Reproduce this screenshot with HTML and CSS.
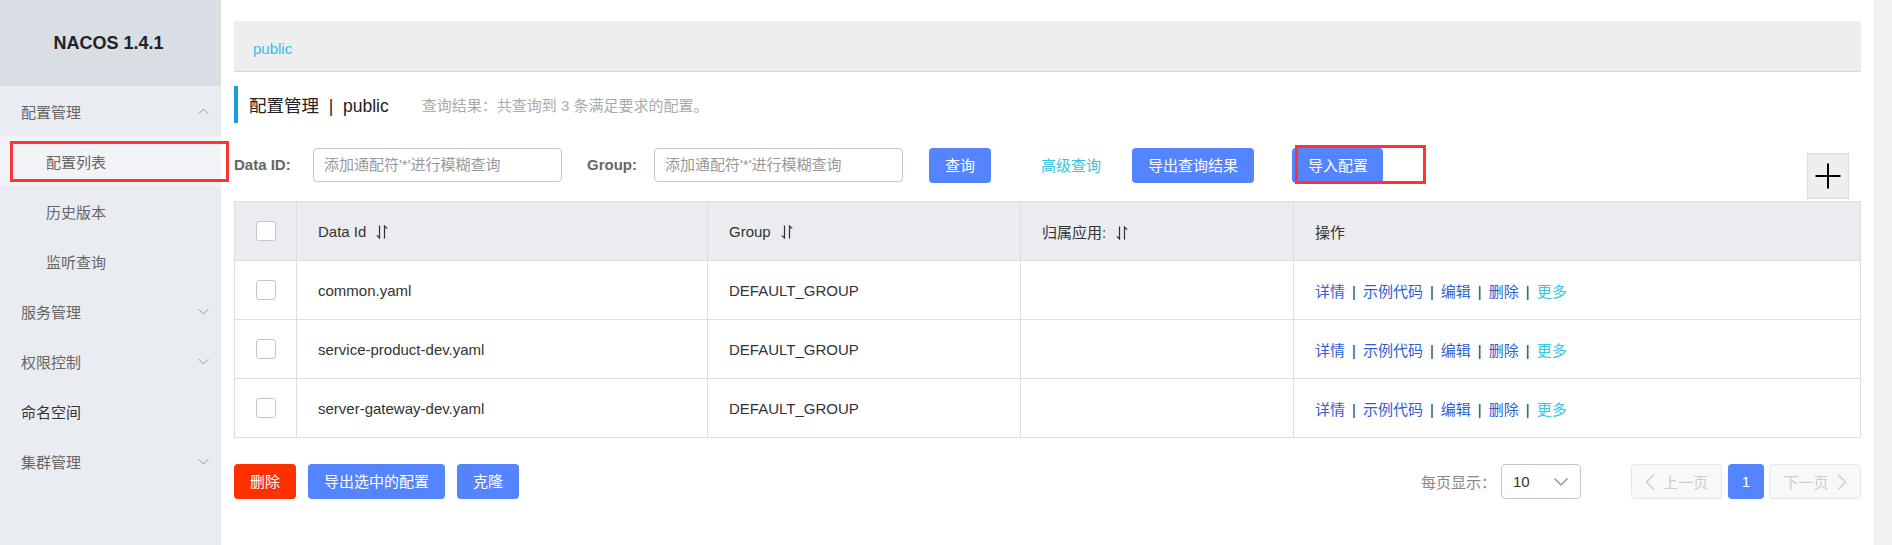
FILE: index.html
```html
<!DOCTYPE html>
<html lang="zh-CN">
<head>
<meta charset="utf-8">
<title>Nacos</title>
<link rel="stylesheet" href="styles.css">
</head>
<body>
<div class="app">
  <aside class="sidebar">
    <div class="brand">NACOS 1.4.1</div>
    <ul class="menu">
      <li class="item top"><span>配置管理</span>
        <svg class="chev" width="11" height="7" viewBox="0 0 11 7"><path d="M0.5 6 L5.5 1 L10.5 6" fill="none" stroke="#999" stroke-width="1"/></svg>
      </li>
      <li class="item sub active"><span>配置列表</span><div class="mark"></div></li>
      <li class="item sub"><span>历史版本</span></li>
      <li class="item sub"><span>监听查询</span></li>
      <li class="item top"><span>服务管理</span>
        <svg class="chev" width="11" height="7" viewBox="0 0 11 7"><path d="M0.5 1 L5.5 6 L10.5 1" fill="none" stroke="#999" stroke-width="1"/></svg>
      </li>
      <li class="item top"><span>权限控制</span>
        <svg class="chev" width="11" height="7" viewBox="0 0 11 7"><path d="M0.5 1 L5.5 6 L10.5 1" fill="none" stroke="#999" stroke-width="1"/></svg>
      </li>
      <li class="item top dark"><span>命名空间</span></li>
      <li class="item top"><span>集群管理</span>
        <svg class="chev" width="11" height="7" viewBox="0 0 11 7"><path d="M0.5 1 L5.5 6 L10.5 1" fill="none" stroke="#999" stroke-width="1"/></svg>
      </li>
    </ul>
  </aside>

  <main class="main">
    <div class="crumb"><span class="crumb-link">public</span></div>

    <div class="title">
      <span class="title-text">配置管理&nbsp;&nbsp;|&nbsp;&nbsp;public</span>
      <span class="result">查询结果：共查询到 3 条满足要求的配置。</span>
    </div>

    <div class="search">
      <label class="lbl lbl-id">Data ID:</label>
      <div class="input">添加通配符'*'进行模糊查询</div>
      <label class="lbl lbl-group">Group:</label>
      <div class="input">添加通配符'*'进行模糊查询</div>
      <button class="btn btn-query">查询</button>
      <span class="adv">高级查询</span>
      <button class="btn btn-export">导出查询结果</button>
      <div class="import-wrap">
        <button class="btn">导入配置</button>
        <div class="mark2"></div>
      </div>
      <div class="plus">
        <svg width="28" height="28" viewBox="0 0 28 28"><path d="M14 1.5 V26.5 M1.5 14 H26.5" stroke="#000" stroke-width="2" fill="none"/></svg>
      </div>
    </div>

    <table class="grid">
      <colgroup>
        <col class="c-check"><col class="c-id"><col class="c-group"><col class="c-app"><col>
      </colgroup>
      <thead>
        <tr>
          <th><span class="cb"></span></th>
          <th>Data Id<svg class="sort" width="12" height="14" viewBox="0 0 12 14"><path d="M3.5 0.5 V13 L0.8 10.3 M8.5 13.5 V1 L11.2 3.7" fill="none" stroke="#333" stroke-width="1.2"/></svg></th>
          <th>Group<svg class="sort" width="12" height="14" viewBox="0 0 12 14"><path d="M3.5 0.5 V13 L0.8 10.3 M8.5 13.5 V1 L11.2 3.7" fill="none" stroke="#333" stroke-width="1.2"/></svg></th>
          <th>归属应用:<svg class="sort" width="12" height="14" viewBox="0 0 12 14"><path d="M3.5 0.5 V13 L0.8 10.3 M8.5 13.5 V1 L11.2 3.7" fill="none" stroke="#333" stroke-width="1.2"/></svg></th>
          <th>操作</th>
        </tr>
      </thead>
      <tbody>
        <tr>
          <td><span class="cb"></span></td>
          <td>common.yaml</td>
          <td>DEFAULT_GROUP</td>
          <td></td>
          <td class="ops"><a>详情</a><i>|</i><a>示例代码</a><i>|</i><a>编辑</a><i>|</i><a>删除</a><i>|</i><a class="more">更多</a></td>
        </tr>
        <tr>
          <td><span class="cb"></span></td>
          <td>service-product-dev.yaml</td>
          <td>DEFAULT_GROUP</td>
          <td></td>
          <td class="ops"><a>详情</a><i>|</i><a>示例代码</a><i>|</i><a>编辑</a><i>|</i><a>删除</a><i>|</i><a class="more">更多</a></td>
        </tr>
        <tr>
          <td><span class="cb"></span></td>
          <td>server-gateway-dev.yaml</td>
          <td>DEFAULT_GROUP</td>
          <td></td>
          <td class="ops"><a>详情</a><i>|</i><a>示例代码</a><i>|</i><a>编辑</a><i>|</i><a>删除</a><i>|</i><a class="more">更多</a></td>
        </tr>
      </tbody>
    </table>

    <div class="footer">
      <div class="actions">
        <button class="btn btn-danger">删除</button>
        <button class="btn">导出选中的配置</button>
        <button class="btn">克隆</button>
      </div>
      <div class="pager">
        <span class="per">每页显示：</span>
        <div class="select"><span>10</span>
          <svg width="14" height="8" viewBox="0 0 14 8"><path d="M0.5 0.5 L7 7 L13.5 0.5" fill="none" stroke="#888" stroke-width="1.2"/></svg>
        </div>
        <div class="pg pg-prev">
          <svg width="10" height="16" viewBox="0 0 10 16"><path d="M9 0.5 L1.5 8 L9 15.5" fill="none" stroke="#ccc" stroke-width="1.4"/></svg>
          <span>上一页</span>
        </div>
        <div class="pg pg-cur">1</div>
        <div class="pg pg-next">
          <span>下一页</span>
          <svg width="10" height="16" viewBox="0 0 10 16"><path d="M1 0.5 L8.5 8 L1 15.5" fill="none" stroke="#ccc" stroke-width="1.4"/></svg>
        </div>
      </div>
    </div>
  </main>

  <div class="scrollbar"></div>
</div>
</body>
</html>
```

FILE: styles.css
```css
* { box-sizing: border-box; }

html, body {
  margin: 0;
  padding: 0;
  background: #fff;
}

body {
  font-family: "Liberation Sans", "Noto Sans CJK SC", sans-serif;
  font-size: 15px;
  color: #333;
}

.app {
  display: flex;
  height: 545px;
  overflow: hidden;
}

/* ---------- sidebar ---------- */
.sidebar {
  width: 221px;
  flex: none;
  background: #e9ecf1;
  position: relative;
  z-index: 2;
}

.brand {
  height: 86px;
  background: #d9dde4;
  display: flex;
  align-items: center;
  justify-content: center;
  font-weight: bold;
  font-size: 18px;
  color: #222;
  padding-right: 4px;
}

.menu {
  list-style: none;
  margin: 0;
  padding: 0;
}

.item {
  height: 50px;
  display: flex;
  align-items: center;
  justify-content: space-between;
  padding-right: 12px;
  color: #666;
  font-size: 15px;
}

.item.top { padding-left: 21px; }
.item.sub { padding-left: 46px; }
.item.dark { color: #333; }

.item.active {
  background: #f2f3f7;
  position: relative;
}

.chev { display: block; }

.mark {
  position: absolute;
  left: 10px;
  top: 5px;
  width: 219px;
  height: 41px;
  border: 3px solid #f33;
}

/* ---------- main ---------- */
.main {
  flex: 1;
  min-width: 0;
  padding: 21px 13px 0 13px;
}

.crumb {
  height: 51px;
  background: #eeeeee;
  border-bottom: 1px solid #d9d9d9;
  display: flex;
  align-items: center;
  padding: 5px 0 0 19px;
}

.crumb-link {
  color: #37bde3;
  font-size: 15px;
}

.title {
  margin-top: 14px;
  height: 37px;
  border-left: 4px solid #1a9ed6;
  padding-left: 11px;
  display: flex;
  align-items: center;
}

.title-text {
  font-size: 17.5px;
  color: #222;
}

.result {
  margin-left: 33px;
  color: #aaa;
  font-size: 15px;
}

.search {
  margin-top: 25px;
  height: 51px;
  display: flex;
  align-items: flex-start;
}

.lbl {
  height: 35px;
  line-height: 34px;
  font-weight: bold;
  color: #666;
  font-size: 15px;
}

.lbl-id { width: 79px; }
.lbl-group { width: 67px; margin-left: 25px; }

.input {
  width: 249px;
  height: 34px;
  border: 1px solid #c4c6cf;
  border-radius: 4px;
  padding-left: 10px;
  line-height: 32px;
  color: #999;
  font-size: 15px;
  white-space: nowrap;
  overflow: hidden;
}

.btn {
  height: 35px;
  padding: 0 16px;
  border: none;
  border-radius: 4px;
  background: #5584ff;
  color: #fff;
  font-family: "Liberation Sans", "Noto Sans CJK SC", sans-serif;
  font-size: 15px;
  line-height: 35px;
  cursor: pointer;
}

.btn-query { margin-left: 26px; }

.adv {
  margin-left: 50px;
  height: 35px;
  line-height: 35px;
  color: #33c4e3;
}

.btn-export { margin-left: 31px; }

.import-wrap {
  margin-left: 38px;
  position: relative;
}

.import-wrap .btn { padding: 0 15px 0 16px; }

.mark2 {
  position: absolute;
  left: 3px;
  top: -3px;
  width: 131px;
  height: 39px;
  border: 3px solid #f33;
}

.plus {
  margin-left: auto;
  margin-right: 12px;
  margin-top: 5px;
  width: 42px;
  height: 46px;
  background: #eeeeee;
  border: 1px solid #dcdcdc;
  display: flex;
  align-items: center;
  justify-content: center;
}

/* ---------- table ---------- */
.grid {
  margin-top: 2px;
  width: 100%;
  border-collapse: collapse;
  table-layout: fixed;
  font-size: 15px;
}

.c-check { width: 62px; }
.c-id { width: 411px; }
.c-group { width: 313px; }
.c-app { width: 273px; }

.grid tr { height: 59px; }

.grid th,
.grid td {
  border: 1px solid #dcdee3;
  padding: 0 21px;
  text-align: left;
  font-weight: normal;
  color: #333;
  vertical-align: middle;
  white-space: nowrap;
}

.grid th { background: #ebecf0; }

.sort {
  margin-left: 10px;
  vertical-align: -2px;
}

.cb {
  display: block;
  width: 20px;
  height: 20px;
  border: 1px solid #c4c6cf;
  border-radius: 3px;
  background: #fff;
}

.ops a {
  color: #2d5fd3;
}

.ops a.more { color: #33c8e6; }

.ops i {
  font-style: normal;
  color: #333;
  margin: 0 7px;
}

/* ---------- footer ---------- */
.footer {
  margin-top: 26px;
  display: flex;
  justify-content: space-between;
  align-items: center;
}

.actions {
  display: flex;
  gap: 12px;
}

.btn-danger { background: #ff3000; }

.pager {
  display: flex;
  align-items: center;
}

.per {
  color: #888;
  margin-right: 5px;
}

.select {
  width: 80px;
  height: 35px;
  border: 1px solid #c4c6cf;
  border-radius: 4px;
  display: flex;
  align-items: center;
  justify-content: space-between;
  padding: 0 12px 0 11px;
  color: #333;
}

.pg {
  height: 35px;
  border-radius: 4px;
  display: flex;
  align-items: center;
  justify-content: center;
  gap: 8px;
}

.pg-prev,
.pg-next {
  width: 91px;
  background: #f7f8fa;
  border: 1px solid #e6e7eb;
  color: #ccc;
}

.pg-prev { margin-left: 50px; }

.pg-cur {
  width: 36px;
  margin: 0 5px 0 6px;
  background: #5584ff;
  color: #fff;
}

.pg-next { width: 92px; }

/* ---------- fake scrollbar track ---------- */
.scrollbar {
  width: 18px;
  flex: none;
  background: #f1f1f1;
}
```
